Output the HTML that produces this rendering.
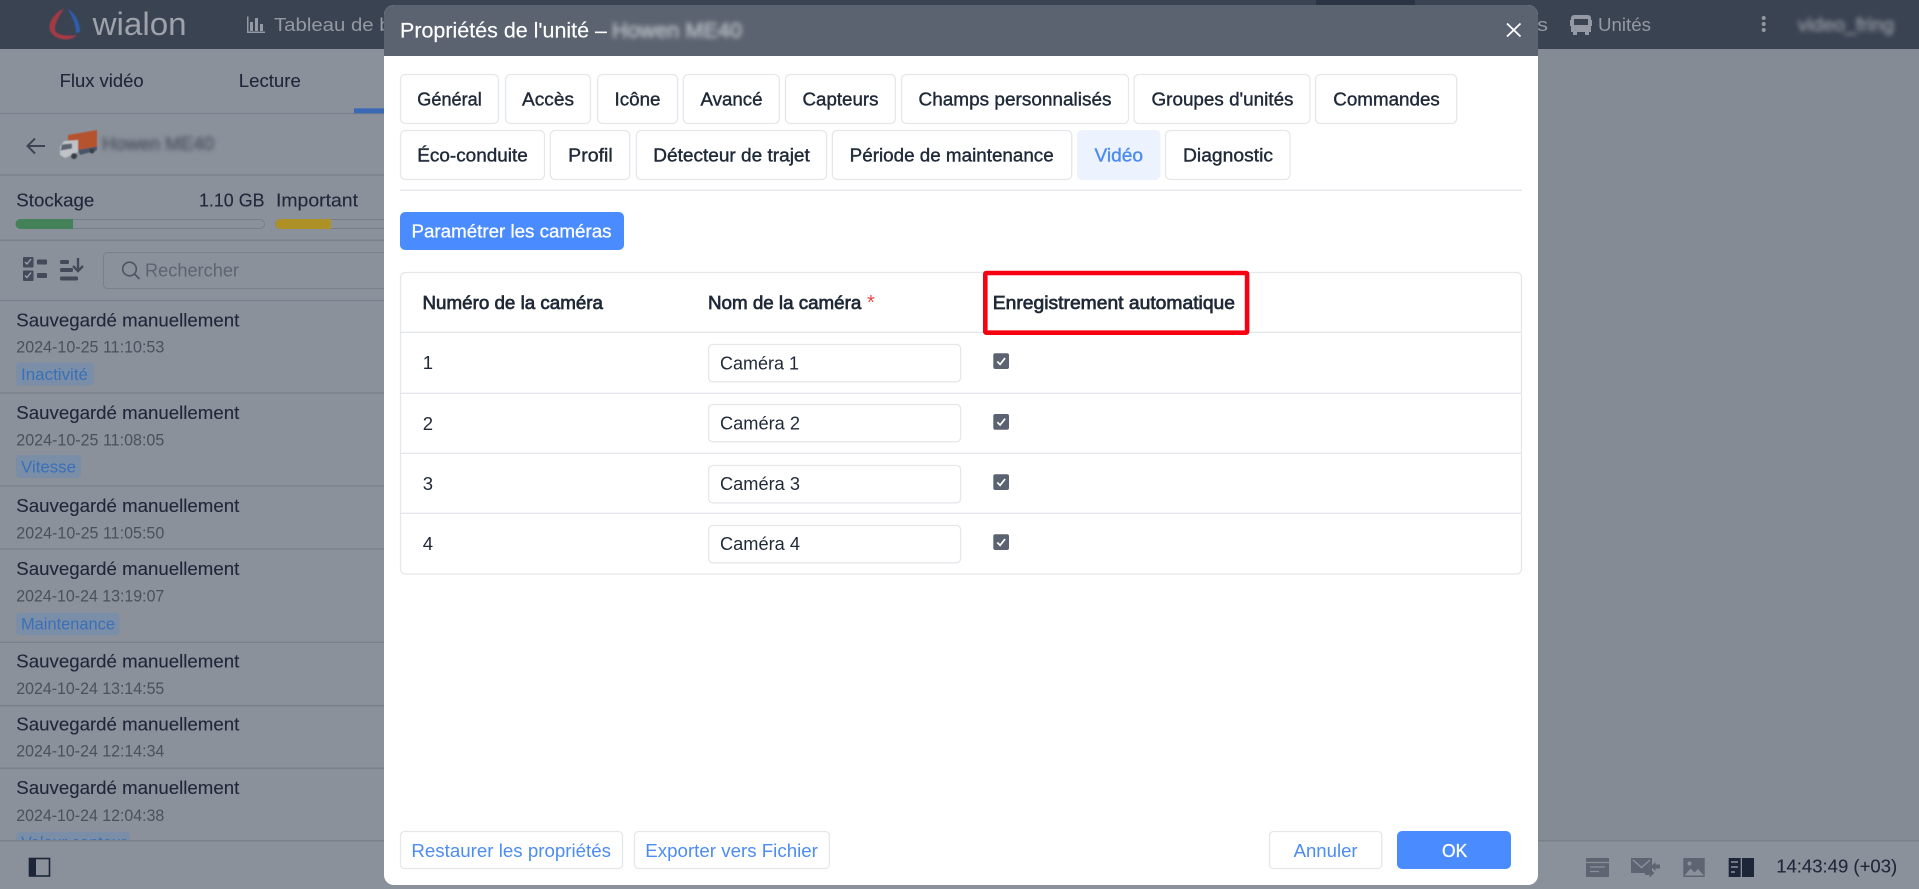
<!DOCTYPE html>
<html lang="fr"><head><meta charset="utf-8"><title>Propriétés de l'unité</title>
<style>
html,body{margin:0;padding:0;width:1919px;height:889px;overflow:hidden;background:#858b95}
svg{display:block;font-family:"Liberation Sans",Arial,sans-serif}
.tab{font-size:18.500px;fill:#1f2937;stroke:#1f2937;stroke-width:.4px}
.h{font-size:18.500px;fill:#1f2937;stroke:#1f2937;stroke-width:.7px}
.c{font-size:18.500px;fill:#1f2937}
.t{font-size:18.500px;fill:#20273a;stroke:#20273a;stroke-width:.12px}
.d{font-size:16.500px;fill:#4a515c}
.tg{font-size:16.500px;fill:#3a70b8}
.nav{font-size:18.500px;fill:#9499a3}
.bl{font-size:18.500px;fill:#4d8cf0}
.ln{stroke:#7a808b;stroke-width:1.3}
.tb{fill:#fff;stroke:#e5e7eb;stroke-width:1.3}
.tl{stroke:#e5e7eb;stroke-width:1.3}
.cb{fill:#5b6370}
.ck{fill:none;stroke:#fff;stroke-width:1.7}
</style></head><body>
<svg width="1919" height="889" viewBox="0 0 1919 889" xmlns="http://www.w3.org/2000/svg">
<defs>
<filter id="b" x="-20%" y="-80%" width="140%" height="260%"><feGaussianBlur stdDeviation="2.3"/></filter>
<filter id="s"><feGaussianBlur stdDeviation=".5"/></filter>
<clipPath id="lc"><rect x="0" y="300" width="384" height="540"/></clipPath>
</defs>

<!-- background -->
<rect width="1919" height="889" fill="#858b95"/>
<rect x="0" y="49" width="384" height="840" fill="#8b919b"/>
<rect x="0" y="840" width="1919" height="49" fill="#8b919b"/>
<rect width="1919" height="49" fill="#3a4352"/>
<rect x="1316" y="0" width="99" height="6" fill="#2a3445"/>

<!-- logo -->
<g filter="url(#s)">
<path d="M64 8.500C56 12 49 20 49.500 28C50 35 58 39.500 66 39.500C70 39.500 74 38 77 35C70 36 60 36 56 32C53 28 57 19 64 8.500Z" fill="#a33a44"/>
<path d="M68 9C73 12 80 20 80 32L76 33C76 24 72 17 68 9Z" fill="#2f5fae"/>
</g>
<text x="92.600" y="35" font-size="32" fill="#9da2ab" textLength="94" lengthAdjust="spacingAndGlyphs">wialon</text>

<!-- top nav -->
<g fill="#9499a3">
<rect x="250" y="22" width="3" height="9"/><rect x="255" y="18" width="3" height="13"/><rect x="260" y="24" width="3" height="7"/>
<path d="M247 16.500h1.500V31.500H265V33H247Z"/>
</g>
<text class="nav" x="274" y="31" textLength="146" lengthAdjust="spacingAndGlyphs">Tableau de bord</text>
<text class="nav" x="1525" y="31" textLength="23" lengthAdjust="spacingAndGlyphs">es</text>
<g fill="#9499a3">
<path d="M1574 15h14a3 3 0 0 1 3 3v14h-2v3h-4v-3h-8v3h-4v-3h-2V18a3 3 0 0 1 3-3Zm0 4v6h14v-6ZM1570 20h1v6h-1ZM1591 20h1v6h-1Z" fill-rule="evenodd"/>
<circle cx="1763.700" cy="18" r="2"/><circle cx="1763.700" cy="24" r="2"/><circle cx="1763.700" cy="30" r="2"/>
</g>
<text class="nav" x="1598" y="31" textLength="53" lengthAdjust="spacingAndGlyphs">Unités</text>
<text x="1798" y="31" font-size="18" fill="#8d929c" stroke="#8d929c" stroke-width=".6" filter="url(#b)" textLength="96" lengthAdjust="spacingAndGlyphs">video_fring</text>

<!-- left tabs -->
<text class="t" x="59.600" y="87" textLength="84" lengthAdjust="spacingAndGlyphs">Flux vidéo</text>
<text class="t" x="238.800" y="87" textLength="62" lengthAdjust="spacingAndGlyphs">Lecture</text>
<line class="ln" x1="0" x2="384" y1="113.500" y2="113.500"/>
<rect x="354" y="108.300" width="30" height="5" fill="#3a6ab5"/>

<!-- unit row -->
<path d="M45 146H28M35 138.500L27.500 146L35 153.500" fill="none" stroke="#3d4554" stroke-width="2"/>
<g filter="url(#s)">
<path d="M68 135L97 130V147L78 150V141H68Z" fill="#b5532f"/>
<path d="M60 147L64 141L78 140V152L65 158L60 155Z" fill="#bfc3c8"/>
<path d="M62 144.500L72 143.500V148.500L60.500 150.500Z" fill="#5c6470"/>
<path d="M78 150L97 146.500V150.500L80 155Z" fill="#46566c"/>
<circle cx="74" cy="156" r="3" fill="#3a3f47"/><circle cx="92" cy="151" r="2.500" fill="#3a3f47"/>
</g>
<text x="102" y="150" font-size="18" fill="#555c69" stroke="#555c69" stroke-width=".8" filter="url(#b)" textLength="112" lengthAdjust="spacingAndGlyphs">Howen ME40</text>
<line class="ln" x1="0" x2="384" y1="175" y2="175"/>

<!-- storage -->
<text class="t" x="16.300" y="206.700" textLength="78" lengthAdjust="spacingAndGlyphs">Stockage</text>
<text class="t" x="199" y="206.700" textLength="65.500" lengthAdjust="spacingAndGlyphs">1.10 GB</text>
<text class="t" x="276" y="206.700" textLength="82" lengthAdjust="spacingAndGlyphs">Important</text>
<rect x="16" y="219.500" width="248.500" height="9" rx="4.500" fill="none" stroke="#787e89"/>
<path d="M20.500 219H73V229H20.500a5 5 0 0 1 0-10Z" fill="#438259"/>
<rect x="275.500" y="219.500" width="130" height="9" rx="4.500" fill="none" stroke="#787e89"/>
<path d="M280.500 219H331V229H280.500a5 5 0 0 1 0-10Z" fill="#ad9126"/>
<line class="ln" x1="0" x2="384" y1="240.300" y2="240.300"/>

<!-- toolbar -->
<g fill="#434b5a">
<rect x="23" y="257" width="10.500" height="10.500" rx="1"/><rect x="23" y="270.500" width="10.500" height="10.500" rx="1"/>
<rect x="37" y="259.500" width="10" height="5" rx="1"/><rect x="37" y="273" width="10" height="5" rx="1"/>
<rect x="60" y="260" width="9" height="4" rx="1.500"/><rect x="60" y="268" width="13" height="4" rx="1.500"/><rect x="60" y="276.500" width="18" height="4" rx="1.500"/>
</g>
<path d="M25 262l2 2 4-5M25 275.500l2 2 4-5" fill="none" stroke="#a0a5ae" stroke-width="1.300"/>
<path d="M78 258V271M73 266l5 5 5-5" fill="none" stroke="#434b5a" stroke-width="2.400"/>
<rect x="103.500" y="252.500" width="300" height="36" rx="4" fill="none" stroke="#7a808b"/>
<circle cx="129.500" cy="269" r="6.800" fill="none" stroke="#4d5462" stroke-width="1.600"/>
<path d="M134.500 274L139.500 279" stroke="#4d5462" stroke-width="1.700"/>
<text x="145" y="276.700" font-size="18.500" fill="#5e6571" textLength="94" lengthAdjust="spacingAndGlyphs">Rechercher</text>
<line class="ln" x1="0" x2="384" y1="300.500" y2="300.500"/>

<!-- list -->
<g clip-path="url(#lc)">
<text class="t" x="16.300" y="326.300" textLength="223" lengthAdjust="spacingAndGlyphs">Sauvegardé manuellement</text>
<text class="d" x="16.300" y="352.500" textLength="148" lengthAdjust="spacingAndGlyphs">2024-10-25 11:10:53</text>
<rect x="16" y="362.500" width="78" height="23" rx="4" fill="#7b8ea7"/>
<text class="tg" x="21" y="380" textLength="67" lengthAdjust="spacingAndGlyphs">Inactivité</text>
<line class="ln" x1="0" x2="384" y1="393" y2="393"/>

<text class="t" x="16.300" y="418.800" textLength="223" lengthAdjust="spacingAndGlyphs">Sauvegardé manuellement</text>
<text class="d" x="16.300" y="445.500" textLength="148" lengthAdjust="spacingAndGlyphs">2024-10-25 11:08:05</text>
<rect x="16" y="455" width="65" height="23" rx="4" fill="#7b8ea7"/>
<text class="tg" x="21" y="472.500" textLength="55" lengthAdjust="spacingAndGlyphs">Vitesse</text>
<line class="ln" x1="0" x2="384" y1="486" y2="486"/>

<text class="t" x="16.300" y="511.800" textLength="223" lengthAdjust="spacingAndGlyphs">Sauvegardé manuellement</text>
<text class="d" x="16.300" y="538.500" textLength="148" lengthAdjust="spacingAndGlyphs">2024-10-25 11:05:50</text>
<line class="ln" x1="0" x2="384" y1="549" y2="549"/>

<text class="t" x="16.300" y="574.800" textLength="223" lengthAdjust="spacingAndGlyphs">Sauvegardé manuellement</text>
<text class="d" x="16.300" y="601.500" textLength="148" lengthAdjust="spacingAndGlyphs">2024-10-24 13:19:07</text>
<rect x="16" y="612.700" width="103.600" height="22.500" rx="4" fill="#7b8ea7"/>
<text class="tg" x="21" y="629.300" textLength="94" lengthAdjust="spacingAndGlyphs">Maintenance</text>
<line class="ln" x1="0" x2="384" y1="642.300" y2="642.300"/>

<text class="t" x="16.300" y="667.700" textLength="223" lengthAdjust="spacingAndGlyphs">Sauvegardé manuellement</text>
<text class="d" x="16.300" y="694" textLength="148" lengthAdjust="spacingAndGlyphs">2024-10-24 13:14:55</text>
<line class="ln" x1="0" x2="384" y1="705.700" y2="705.700"/>

<text class="t" x="16.300" y="730.700" textLength="223" lengthAdjust="spacingAndGlyphs">Sauvegardé manuellement</text>
<text class="d" x="16.300" y="756.700" textLength="148" lengthAdjust="spacingAndGlyphs">2024-10-24 12:14:34</text>
<line class="ln" x1="0" x2="384" y1="768.300" y2="768.300"/>

<text class="t" x="16.300" y="794" textLength="223" lengthAdjust="spacingAndGlyphs">Sauvegardé manuellement</text>
<text class="d" x="16.300" y="821" textLength="148" lengthAdjust="spacingAndGlyphs">2024-10-24 12:04:38</text>
<rect x="16" y="831.700" width="114" height="23" rx="4" fill="#7b8ea7"/>
<text class="tg" x="21" y="848" textLength="105.500" lengthAdjust="spacingAndGlyphs">Valeur capteur</text>
</g>

<!-- bottom bar -->
<line class="ln" x1="0" x2="1919" y1="840.700" y2="840.700"/>
<rect x="29.500" y="858.500" width="20" height="17.500" fill="none" stroke="#1c2638" stroke-width="1.600"/>
<rect x="29" y="858" width="7" height="18.500" fill="#1c2638"/>

<g fill="#5d6572">
<path d="M1586 858h23v19h-23Z"/>
<path d="M1631 858h21v15h-21Z"/>
<path d="M1660 864.500h-4.500v-2.500l-5 4.500 5 4.500v-2.500h4.500Z"/>
<path d="M1645 871h4.500v-2.500l5 4.500-5 4.500v-2.500h-4.500Z"/>
<path d="M1683.300 858h21.400v19h-21.400Z"/>
</g>
<path d="M1633 860l8.500 7.500 8.500-7.500" stroke="#8b919b" stroke-width="1.500" fill="none"/>
<path d="M1586 862.500h23M1590 867h15M1590 871.500h9" stroke="#8b919b" stroke-width="1.200" fill="none"/>
<path d="M1684.500 875.500l6-7 4 4 3.500-3.500 6 6.500Z" fill="#8b919b"/>
<circle cx="1689.500" cy="863.500" r="2" fill="#8b919b"/>
<rect x="1728.700" y="858" width="12" height="19" fill="#1c2638"/>
<rect x="1742" y="858" width="12" height="19" fill="#1c2638"/>
<path d="M1731 862h7M1731 867h7M1731 872h4" stroke="#8b919b" stroke-width="1.500"/>
<text class="t" x="1776.200" y="872.700" textLength="121" lengthAdjust="spacingAndGlyphs">14:43:49 (+03)</text>

<!-- MODAL -->
<path d="M394 5H1528a10 10 0 0 1 10 10V875a10 10 0 0 1-10 10H394a10 10 0 0 1-10-10V15a10 10 0 0 1 10-10Z" fill="#fff"/>
<path d="M394 5H1528a10 10 0 0 1 10 10V56H384V15a10 10 0 0 1 10-10Z" fill="#5b6370"/>
<text x="400" y="37.500" font-size="21.500" fill="#fff" stroke="#fff" stroke-width=".15" textLength="207" lengthAdjust="spacingAndGlyphs">Propriétés de l'unité –</text>
<text x="612" y="37.500" font-size="21" fill="#b4b8be" stroke="#b4b8be" stroke-width=".8" filter="url(#b)" textLength="130" lengthAdjust="spacingAndGlyphs">Howen ME40</text>
<path d="M1507 23.500L1520.500 36.500M1520.500 23.500L1507 36.500" stroke="#fff" stroke-width="1.800" fill="none"/>

<!-- tabs row 1 -->
<rect class="tb" x="400.500" y="74.500" width="98" height="49" rx="5"/>
<text class="tab" x="417.300" y="105.300" textLength="64.500" lengthAdjust="spacingAndGlyphs">Général</text>
<rect class="tb" x="505.600" y="74.500" width="84.800" height="49" rx="5"/>
<text class="tab" x="522" y="105.300" textLength="52" lengthAdjust="spacingAndGlyphs">Accès</text>
<rect class="tb" x="597.600" y="74.500" width="79.900" height="49" rx="5"/>
<text class="tab" x="614.500" y="105.300" textLength="46" lengthAdjust="spacingAndGlyphs">Icône</text>
<rect class="tb" x="683.300" y="74.500" width="96" height="49" rx="5"/>
<text class="tab" x="700.500" y="105.300" textLength="62" lengthAdjust="spacingAndGlyphs">Avancé</text>
<rect class="tb" x="785.500" y="74.500" width="109.900" height="49" rx="5"/>
<text class="tab" x="802.500" y="105.300" textLength="76" lengthAdjust="spacingAndGlyphs">Capteurs</text>
<rect class="tb" x="901.500" y="74.500" width="227" height="49" rx="5"/>
<text class="tab" x="918.500" y="105.300" textLength="193" lengthAdjust="spacingAndGlyphs">Champs personnalisés</text>
<rect class="tb" x="1134" y="74.500" width="176" height="49" rx="5"/>
<text class="tab" x="1151.500" y="105.300" textLength="142" lengthAdjust="spacingAndGlyphs">Groupes d'unités</text>
<rect class="tb" x="1315.500" y="74.500" width="141.200" height="49" rx="5"/>
<text class="tab" x="1333.300" y="105.300" textLength="106.500" lengthAdjust="spacingAndGlyphs">Commandes</text>

<!-- tabs row 2 -->
<rect class="tb" x="400.500" y="130.500" width="144" height="49" rx="5"/>
<text class="tab" x="417.300" y="161.300" textLength="110.500" lengthAdjust="spacingAndGlyphs">Éco-conduite</text>
<rect class="tb" x="550.300" y="130.500" width="79.400" height="49" rx="5"/>
<text class="tab" x="568.200" y="161.300" textLength="44.500" lengthAdjust="spacingAndGlyphs">Profil</text>
<rect class="tb" x="636.400" y="130.500" width="190.200" height="49" rx="5"/>
<text class="tab" x="653.300" y="161.300" textLength="156.500" lengthAdjust="spacingAndGlyphs">Détecteur de trajet</text>
<rect class="tb" x="832.400" y="130.500" width="239.300" height="49" rx="5"/>
<text class="tab" x="849.700" y="161.300" textLength="204" lengthAdjust="spacingAndGlyphs">Période de maintenance</text>
<rect x="1077" y="130" width="83.500" height="50" rx="5" fill="#edf3fe"/>
<text class="tab" x="1094.500" y="161.300" style="fill:#4d8cf0;stroke:#4d8cf0" textLength="48.500" lengthAdjust="spacingAndGlyphs">Vidéo</text>
<rect class="tb" x="1165.500" y="130.500" width="124.500" height="49" rx="5"/>
<text class="tab" x="1183" y="161.300" textLength="90" lengthAdjust="spacingAndGlyphs">Diagnostic</text>

<line class="tl" x1="400" x2="1522" y1="190.300" y2="190.300"/>

<!-- button -->
<rect x="400" y="212" width="224" height="38" rx="5" fill="#4a8cff"/>
<text x="411.500" y="237.500" font-size="18.500" fill="#fff" stroke="#fff" stroke-width=".3" textLength="200" lengthAdjust="spacingAndGlyphs">Paramétrer les caméras</text>

<!-- table -->
<rect class="tb" x="400.500" y="272.500" width="1121" height="301.500" rx="5"/>
<line class="tl" x1="400" x2="1522" y1="332.300" y2="332.300"/>
<line class="tl" x1="400" x2="1522" y1="393.300" y2="393.300"/>
<line class="tl" x1="400" x2="1522" y1="453.300" y2="453.300"/>
<line class="tl" x1="400" x2="1522" y1="513.300" y2="513.300"/>
<text class="h" x="422.500" y="309" textLength="180.500" lengthAdjust="spacingAndGlyphs">Numéro de la caméra</text>
<text class="h" x="708" y="309" textLength="153.300" lengthAdjust="spacingAndGlyphs">Nom de la caméra</text>
<text x="867" y="309" font-size="20" fill="#ef4444">*</text>
<text class="h" x="992.800" y="309" textLength="242.200" lengthAdjust="spacingAndGlyphs">Enregistrement automatique</text>

<text class="c" x="422.700" y="369">1</text>
<text class="c" x="422.700" y="430">2</text>
<text class="c" x="422.700" y="490">3</text>
<text class="c" x="422.700" y="550">4</text>

<rect class="tb" x="708.600" y="344.500" width="252" height="37.300" rx="4"/>
<rect class="tb" x="708.600" y="404.500" width="252" height="37.300" rx="4"/>
<rect class="tb" x="708.600" y="465.500" width="252" height="37.300" rx="4"/>
<rect class="tb" x="708.600" y="525.500" width="252" height="37.300" rx="4"/>
<text class="c" x="720" y="369.500" textLength="79" lengthAdjust="spacingAndGlyphs">Caméra 1</text>
<text class="c" x="720" y="429.500" textLength="80" lengthAdjust="spacingAndGlyphs">Caméra 2</text>
<text class="c" x="720" y="490" textLength="80" lengthAdjust="spacingAndGlyphs">Caméra 3</text>
<text class="c" x="720" y="550" textLength="80" lengthAdjust="spacingAndGlyphs">Caméra 4</text>

<rect class="cb" x="993.300" y="353.300" width="15.700" height="15.700" rx="2"/>
<path class="ck" d="M997.300 361.500l2.800 2.800 5-6.300"/>
<rect class="cb" x="993.300" y="414" width="15.700" height="15.700" rx="2"/>
<path class="ck" d="M997.300 422.200l2.800 2.800 5-6.300"/>
<rect class="cb" x="993.300" y="474.300" width="15.700" height="15.700" rx="2"/>
<path class="ck" d="M997.300 482.500l2.800 2.800 5-6.300"/>
<rect class="cb" x="993.300" y="534.300" width="15.700" height="15.700" rx="2"/>
<path class="ck" d="M997.300 542.500l2.800 2.800 5-6.300"/>

<!-- red highlight -->
<rect x="985.300" y="273" width="261.800" height="59.700" rx="1" fill="none" stroke="#f60012" stroke-width="4.600"/>

<!-- footer -->
<rect class="tb" x="400.500" y="831.500" width="222" height="37" rx="4"/>
<text class="bl" x="411.400" y="857" textLength="199.600" lengthAdjust="spacingAndGlyphs">Restaurer les propriétés</text>
<rect class="tb" x="634.500" y="831.500" width="194.800" height="37" rx="4"/>
<text class="bl" x="645.300" y="857" textLength="172.600" lengthAdjust="spacingAndGlyphs">Exporter vers Fichier</text>
<rect class="tb" x="1269.500" y="831.500" width="112.300" height="37" rx="4"/>
<text class="bl" x="1293.600" y="857" textLength="64" lengthAdjust="spacingAndGlyphs">Annuler</text>
<rect x="1397" y="831" width="114" height="38" rx="5" fill="#4a8cff"/>
<text x="1442" y="857" font-size="18.500" fill="#fff" stroke="#fff" stroke-width=".3" textLength="25.200" lengthAdjust="spacingAndGlyphs">OK</text>
</svg>
</body></html>
